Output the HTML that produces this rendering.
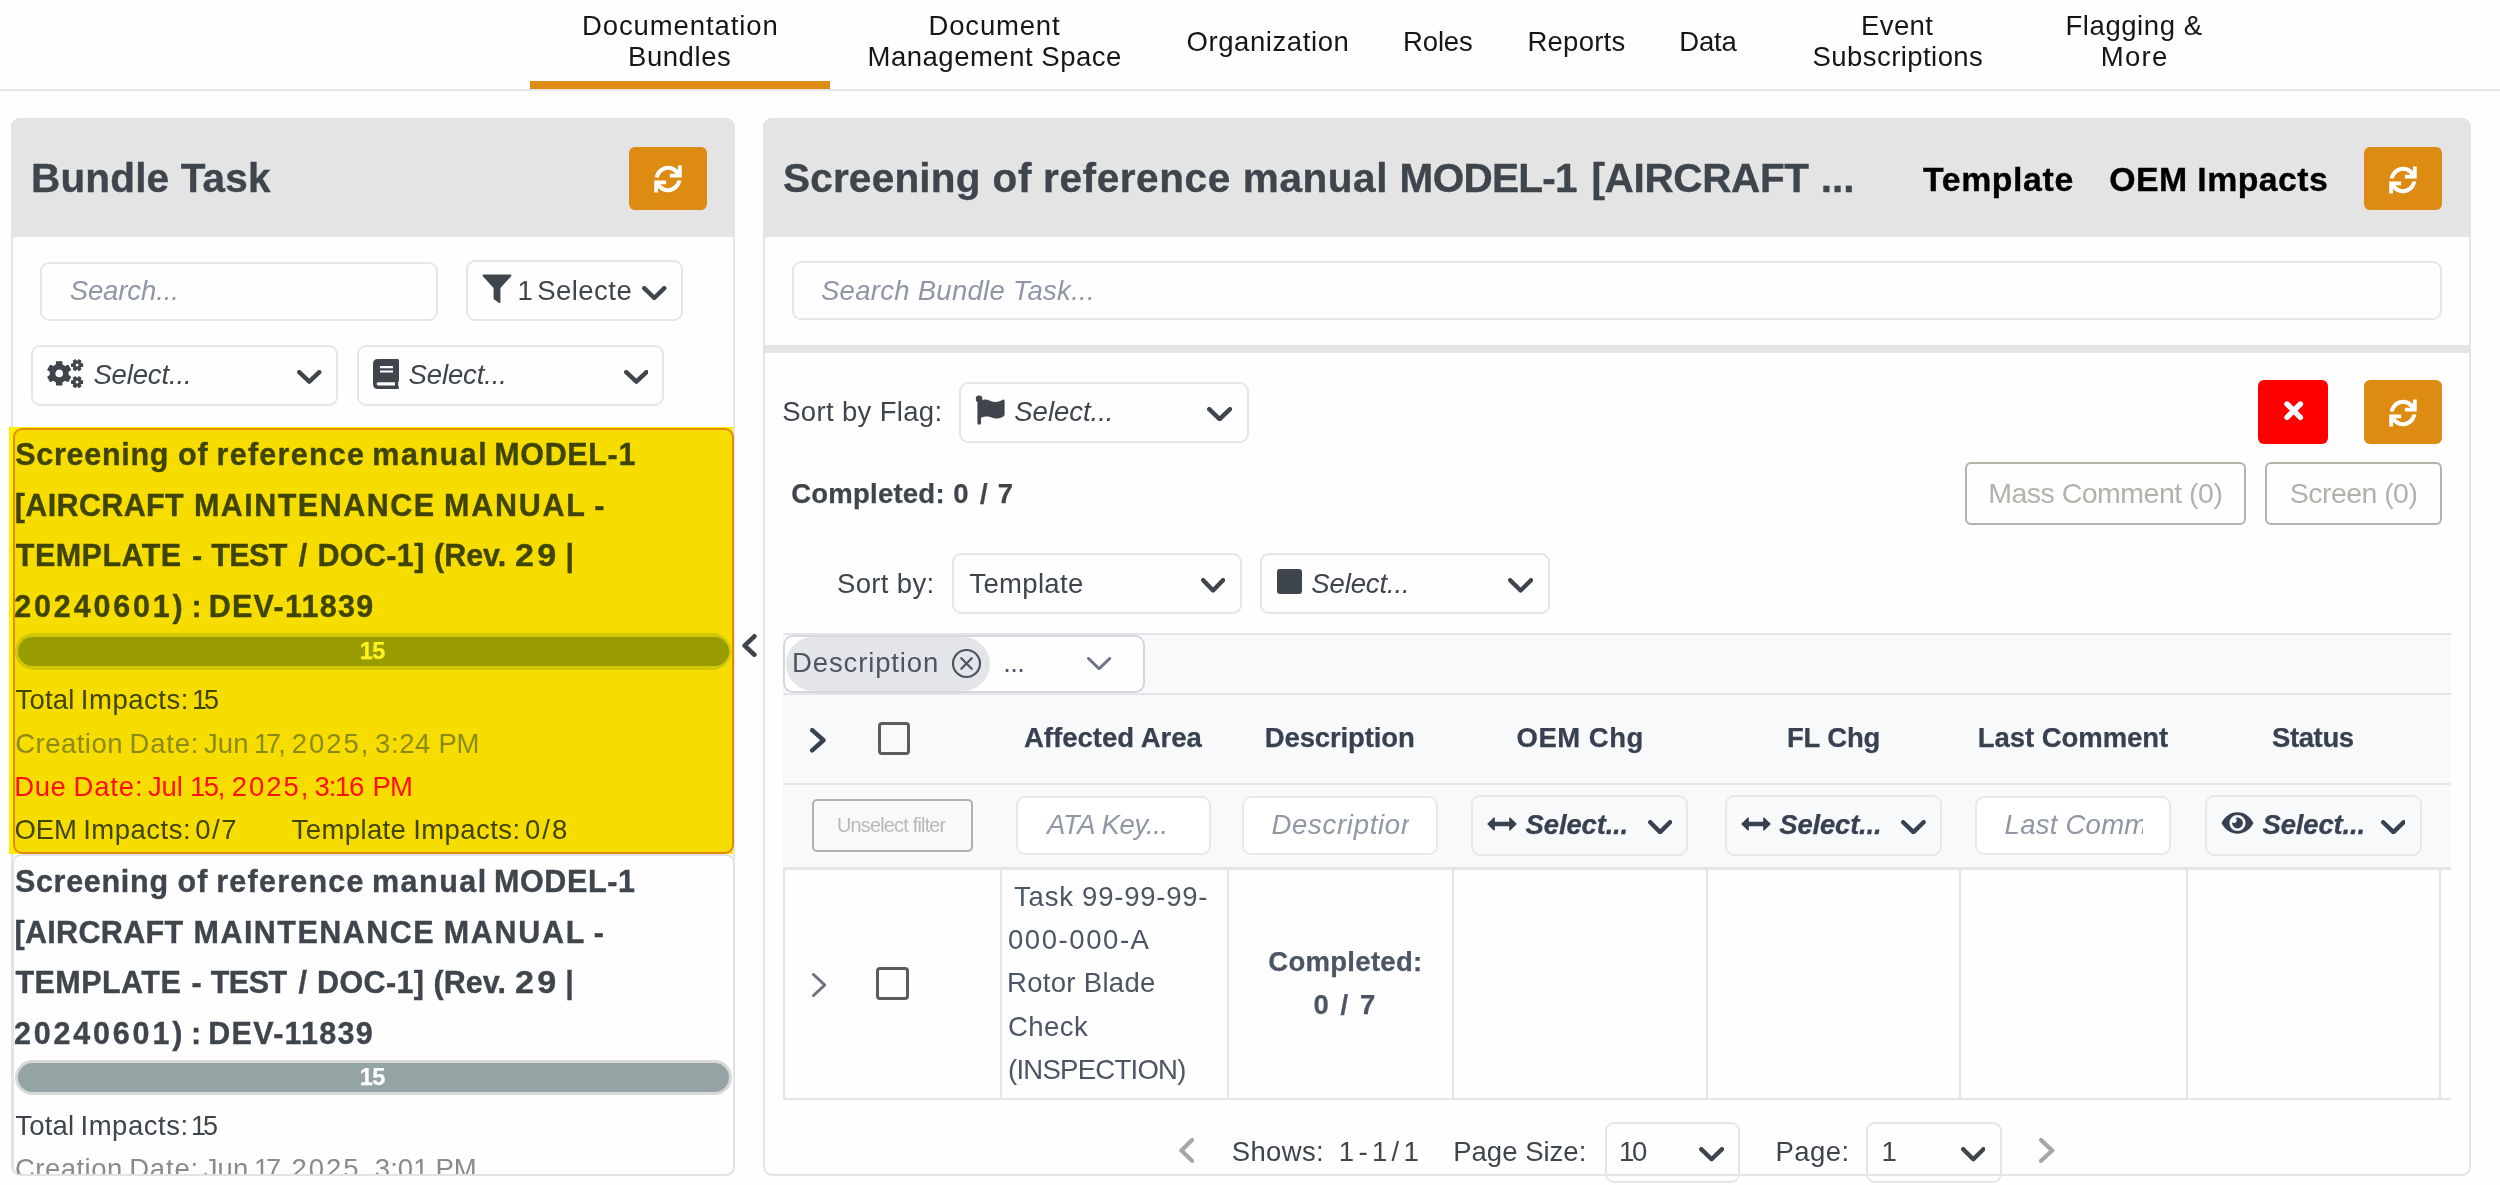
<!DOCTYPE html>
<html lang="en"><head><meta charset="utf-8"><title>Bundle Task</title>
<style>
html,body{margin:0;padding:0}
html{background:#fefefe}
body{width:2500px;height:1185px;overflow:hidden;position:relative;will-change:transform;
 font-family:"Liberation Sans",sans-serif;color:#3e454d}
.b{position:absolute;box-sizing:border-box;display:block}
.t{position:absolute;white-space:pre;margin:0;padding:0;font-weight:400;display:block}
nav,section{position:static;margin:0;padding:0}
.w{margin:0;padding:0;height:0;font-size:0;line-height:0}
</style></head>
<body>
<nav>
<div class="b" style="left:0px;top:89px;width:2500px;height:2px;background:#e6e6e6;"></div>
<div class="b" style="left:530px;top:81px;width:300px;height:8px;background:#de8b14;"></div>
<span class="t" style="left:582.00px;top:12.02px;font-size:27.5px;line-height:27.5px;color:#161616;letter-spacing:0.902px;">Documentation</span>
<span class="t" style="left:628.00px;top:42.72px;font-size:27.5px;line-height:27.5px;color:#161616;letter-spacing:0.562px;">Bundles</span>
<span class="t" style="left:928.50px;top:12.02px;font-size:27.5px;line-height:27.5px;color:#161616;letter-spacing:0.829px;">Document</span>
<span class="t" style="left:867.50px;top:42.72px;font-size:27.5px;line-height:27.5px;color:#161616;letter-spacing:0.511px;">Management Space</span>
<span class="t" style="left:1186.40px;top:28.02px;font-size:27.5px;line-height:27.5px;color:#161616;letter-spacing:0.597px;">Organization</span>
<span class="t" style="left:1403.00px;top:28.02px;font-size:27.5px;line-height:27.5px;color:#161616;letter-spacing:-0.139px;">Roles</span>
<span class="t" style="left:1527.50px;top:28.02px;font-size:27.5px;line-height:27.5px;color:#161616;letter-spacing:0.227px;">Reports</span>
<span class="t" style="left:1679.20px;top:28.02px;font-size:27.5px;line-height:27.5px;color:#161616;letter-spacing:-0.165px;">Data</span>
<span class="t" style="left:1861.00px;top:12.02px;font-size:27.5px;line-height:27.5px;color:#161616;letter-spacing:0.405px;">Event</span>
<span class="t" style="left:1812.60px;top:42.72px;font-size:27.5px;line-height:27.5px;color:#161616;letter-spacing:0.431px;">Subscriptions</span>
<span class="t" style="left:2065.50px;top:12.02px;font-size:27.5px;line-height:27.5px;color:#161616;letter-spacing:0.563px;">Flagging &amp;</span>
<span class="t" style="left:2100.70px;top:42.72px;font-size:27.5px;line-height:27.5px;color:#161616;letter-spacing:1.313px;">More</span>
</nav>
<section id="left">
<div class="b" style="left:11px;top:118px;width:724px;height:1057.8px;border:2px solid #e4e4e4;border-radius:9px;background:#fefefe;"></div>
<div class="b" style="left:11px;top:118px;width:724px;height:119px;background:#e4e4e4;border-radius:9px 9px 0 0;"></div>
<h2 class="t" style="left:31.00px;top:157.72px;font-size:40.5px;line-height:40.5px;font-weight:700;-webkit-text-stroke:0.35px currentColor;color:#3e454d;letter-spacing:0.173px;">Bundle Task</h2>
<div class="b btn" style="left:629px;top:147px;width:78px;height:63px;background:#de8b14;border-radius:6px;"></div>
<svg class="b" style="left:652.5px;top:164.15px" width="30.0" height="30.0" viewBox="-15 -15 30 30" ><defs><clipPath id="sc"><rect x="-15" y="-15" width="30" height="13.4"/></clipPath></defs><g><path d="M10,-13.55 H13.74 V-1.49 H1.86 V-5.2 H10 Z" fill="#fff"/><path d="M-11.1,2 A11.25,11.25 0 0 1 10.4,-4.2" fill="none" stroke="#fff" stroke-width="4" clip-path="url(#sc)"/></g><g transform="rotate(180)"><path d="M10,-13.55 H13.74 V-1.49 H1.86 V-5.2 H10 Z" fill="#fff"/><path d="M-11.1,2 A11.25,11.25 0 0 1 10.4,-4.2" fill="none" stroke="#fff" stroke-width="4" clip-path="url(#sc)"/></g></svg>
<div class="b" style="left:40px;top:261.5px;width:398px;height:59.0px;background:#fefefe;border:2px solid #e6e6e7;border-radius:9px;"></div>
<span class="t" style="left:69.70px;top:276.82px;font-size:27.5px;line-height:27.5px;font-style:italic;color:#8f97a5;letter-spacing:-0.102px;">Search...</span>
<div class="b" style="left:466px;top:260px;width:217px;height:61px;background:#fefefe;border:2px solid #e6e6e7;border-radius:9px;"></div>
<svg class="b" style="left:482px;top:274px" width="30" height="30" viewBox="0 0 30 30" ><path d="M1.6,0.6 H28.4 Q30,0.8 29,2.4 L18.4,14 V28.2 Q18.2,29.8 16.8,28.8 L11.6,25 V14 L1,2.4 Q0,0.8 1.6,0.6 Z" fill="#3e454d"/></svg>
<span class="w"><span class="t" style="left:517.60px;top:276.72px;font-size:27.5px;line-height:27.5px;color:#3e454d;">1</span><span class="t" style="left:537.20px;top:276.72px;font-size:27.5px;line-height:27.5px;color:#3e454d;letter-spacing:0.462px;">Selecte</span></span>
<svg class="b" style="left:642px;top:285.5px" width="24.5" height="14.5" viewBox="0 0 24.5 14.5" ><path d="M2.2,2.2 L12.25,11.97 L22.3,2.2" fill="none" stroke="#3e454d" stroke-width="4.4" stroke-linecap="round" stroke-linejoin="round"/></svg>
<div class="b" style="left:31px;top:344.5px;width:307px;height:61.0px;background:#fefefe;border:2px solid #e6e6e7;border-radius:9px;"></div>
<svg class="b" style="left:47px;top:359px" width="37" height="29" viewBox="0 0 37 29" ><path d="M9.60,2.79 L14.80,2.79 L14.98,5.84 L18.22,7.71 L20.96,6.35 L23.56,10.84 L21.00,12.53 L21.00,16.27 L23.56,17.96 L20.96,22.45 L18.22,21.09 L14.98,22.96 L14.80,26.01 L9.60,26.01 L9.42,22.96 L6.18,21.09 L3.44,22.45 L0.84,17.96 L3.40,16.27 L3.40,12.53 L0.84,10.84 L3.44,6.35 L6.18,7.71 L9.42,5.84 Z M16.60,14.40 A4.4,4.4 0 1 0 7.80,14.40 A4.4,4.4 0 1 0 16.60,14.40 Z M35.57,4.88 L35.57,7.32 L33.90,7.34 L33.07,8.78 L33.89,10.22 L31.77,11.44 L30.93,10.01 L29.27,10.01 L28.43,11.44 L26.31,10.22 L27.13,8.78 L26.30,7.34 L24.63,7.32 L24.63,4.88 L26.30,4.86 L27.13,3.42 L26.31,1.98 L28.43,0.76 L29.27,2.19 L30.93,2.19 L31.77,0.76 L33.89,1.98 L33.07,3.42 L33.90,4.86 Z M32.20,6.10 A2.1,2.1 0 1 0 28.00,6.10 A2.1,2.1 0 1 0 32.20,6.10 Z M35.57,21.88 L35.57,24.32 L33.90,24.34 L33.07,25.78 L33.89,27.22 L31.77,28.44 L30.93,27.01 L29.27,27.01 L28.43,28.44 L26.31,27.22 L27.13,25.78 L26.30,24.34 L24.63,24.32 L24.63,21.88 L26.30,21.86 L27.13,20.42 L26.31,18.98 L28.43,17.76 L29.27,19.19 L30.93,19.19 L31.77,17.76 L33.89,18.98 L33.07,20.42 L33.90,21.86 Z M32.20,23.10 A2.1,2.1 0 1 0 28.00,23.10 A2.1,2.1 0 1 0 32.20,23.10 Z" fill="#3e454d" fill-rule="evenodd" stroke="#3e454d" stroke-width="1.2" stroke-linejoin="round"/></svg>
<span class="t" style="left:93.40px;top:360.72px;font-size:27.5px;line-height:27.5px;font-style:italic;color:#3e454d;letter-spacing:-0.139px;">Select...</span>
<svg class="b" style="left:297.3px;top:369.8px" width="24.5" height="14.199999999999989" viewBox="0 0 24.5 14.199999999999989" ><path d="M2.2,2.2 L12.25,11.66999999999999 L22.3,2.2" fill="none" stroke="#3e454d" stroke-width="4.4" stroke-linecap="round" stroke-linejoin="round"/></svg>
<div class="b" style="left:357px;top:344.5px;width:307px;height:61.0px;background:#fefefe;border:2px solid #e6e6e7;border-radius:9px;"></div>
<svg class="b" style="left:373px;top:358.5px" width="26" height="30.0" viewBox="0 0 26 30" ><path d="M5,0 H24.6 Q26,0 26,1.4 V21.6 Q26,22.6 25.2,23 V27 Q26,27.4 26,28.4 Q26,30 24.6,30 H5 Q0,30 0,25 V5 Q0,0 5,0 Z M7,7 V9.2 H20 V7 Z M7,11.4 V13.6 H20 V11.4 Z M5.2,23.2 Q3.6,23.2 3.6,24.8 Q3.6,26.6 5.2,26.6 H22 V23.2 Z" fill="#3e454d" fill-rule="evenodd"/></svg>
<span class="t" style="left:408.50px;top:360.72px;font-size:27.5px;line-height:27.5px;font-style:italic;color:#3e454d;letter-spacing:-0.114px;">Select...</span>
<svg class="b" style="left:623.6px;top:369.8px" width="24.699999999999932" height="14.199999999999989" viewBox="0 0 24.699999999999932 14.199999999999989" ><path d="M2.2,2.2 L12.349999999999966,11.66999999999999 L22.499999999999932,2.2" fill="none" stroke="#3e454d" stroke-width="4.4" stroke-linecap="round" stroke-linejoin="round"/></svg>
<div class="b" style="left:9px;top:427px;width:724.4px;height:427px;background:#ffee00;"></div>
<div class="b" style="left:13px;top:428px;width:720.8px;height:426px;background:#f7dc00;border:2px solid #e38a00;border-radius:9px;"></div>
<div class="w"><span class="t" style="left:15.30px;top:438.98px;font-size:30.5px;line-height:30.5px;font-weight:700;-webkit-text-stroke:0.35px currentColor;color:#3f4400;letter-spacing:0.708px;">Screening</span><span class="t" style="left:178.00px;top:438.98px;font-size:30.5px;line-height:30.5px;font-weight:700;-webkit-text-stroke:0.35px currentColor;color:#3f4400;letter-spacing:0.969px;">of</span><span class="t" style="left:216.60px;top:438.98px;font-size:30.5px;line-height:30.5px;font-weight:700;-webkit-text-stroke:0.35px currentColor;color:#3f4400;letter-spacing:1.253px;">reference</span><span class="t" style="left:372.30px;top:438.98px;font-size:30.5px;line-height:30.5px;font-weight:700;-webkit-text-stroke:0.35px currentColor;color:#3f4400;letter-spacing:1.519px;">manual</span><span class="t" style="left:494.30px;top:438.98px;font-size:30.5px;line-height:30.5px;font-weight:700;-webkit-text-stroke:0.35px currentColor;color:#3f4400;letter-spacing:0.635px;">MODEL-1</span></div>
<div class="w"><span class="t" style="left:14.80px;top:489.58px;font-size:30.5px;line-height:30.5px;font-weight:700;-webkit-text-stroke:0.35px currentColor;color:#3f4400;letter-spacing:0.351px;">[AIRCRAFT</span><span class="t" style="left:193.90px;top:489.58px;font-size:30.5px;line-height:30.5px;font-weight:700;-webkit-text-stroke:0.35px currentColor;color:#3f4400;letter-spacing:1.479px;">MAINTENANCE</span><span class="t" style="left:444.10px;top:489.58px;font-size:30.5px;line-height:30.5px;font-weight:700;-webkit-text-stroke:0.35px currentColor;color:#3f4400;letter-spacing:1.718px;">MANUAL</span><span class="t" style="left:594.25px;top:489.58px;font-size:30.5px;line-height:30.5px;font-weight:700;-webkit-text-stroke:0.35px currentColor;color:#3f4400;">-</span></div>
<div class="w"><span class="t" style="left:15.80px;top:540.18px;font-size:30.5px;line-height:30.5px;font-weight:700;-webkit-text-stroke:0.35px currentColor;color:#3f4400;letter-spacing:0.465px;">TEMPLATE</span><span class="t" style="left:191.95px;top:540.18px;font-size:30.5px;line-height:30.5px;font-weight:700;-webkit-text-stroke:0.35px currentColor;color:#3f4400;">-</span><span class="t" style="left:211.20px;top:540.18px;font-size:30.5px;line-height:30.5px;font-weight:700;-webkit-text-stroke:0.35px currentColor;color:#3f4400;letter-spacing:-0.572px;">TEST</span><span class="t" style="left:298.80px;top:540.18px;font-size:30.5px;line-height:30.5px;font-weight:700;-webkit-text-stroke:0.35px currentColor;color:#3f4400;">/</span><span class="t" style="left:317.40px;top:540.18px;font-size:30.5px;line-height:30.5px;font-weight:700;-webkit-text-stroke:0.35px currentColor;color:#3f4400;letter-spacing:0.381px;">DOC-1]</span><span class="t" style="left:434.00px;top:540.18px;font-size:30.5px;line-height:30.5px;font-weight:700;-webkit-text-stroke:0.35px currentColor;color:#3f4400;letter-spacing:-0.011px;">(Rev.</span><span class="t" style="left:515.48px;top:540.18px;font-size:30.5px;line-height:30.5px;font-weight:700;-webkit-text-stroke:0.35px currentColor;color:#3f4400;letter-spacing:3.000px;transform:scaleX(1.1183);transform-origin:0 0;">29</span><span class="t" style="left:565.60px;top:540.18px;font-size:30.5px;line-height:30.5px;font-weight:700;-webkit-text-stroke:0.35px currentColor;color:#3f4400;">|</span></div>
<div class="w"><span class="t" style="left:14.30px;top:590.78px;font-size:30.5px;line-height:30.5px;font-weight:700;-webkit-text-stroke:0.35px currentColor;color:#3f4400;letter-spacing:2.825px;">20240601)</span><span class="t" style="left:191.50px;top:590.78px;font-size:30.5px;line-height:30.5px;font-weight:700;-webkit-text-stroke:0.35px currentColor;color:#3f4400;">:</span><span class="t" style="left:208.70px;top:590.78px;font-size:30.5px;line-height:30.5px;font-weight:700;-webkit-text-stroke:0.35px currentColor;color:#3f4400;letter-spacing:1.268px;">DEV-11839</span></div>
<div class="b" style="left:15px;top:633px;width:716px;height:37px;background:#d0c806;border-radius:19px;"></div>
<div class="b" style="left:18px;top:637px;width:711px;height:29px;background:#989c00;border-radius:15px;"></div>
<span class="t" style="left:359.75px;top:639.61px;font-size:23.5px;line-height:23.5px;font-weight:700;-webkit-text-stroke:0.25px currentColor;color:#fff31f;letter-spacing:-0.570px;">15</span>
<p class="w"><span class="t" style="left:15.60px;top:686.12px;font-size:27.5px;line-height:27.5px;color:#3f4400;letter-spacing:0.155px;">Total</span><span class="t" style="left:80.80px;top:686.12px;font-size:27.5px;line-height:27.5px;color:#3f4400;letter-spacing:0.518px;">Impacts:</span><span class="t" style="left:191.64px;top:686.12px;font-size:27.5px;line-height:27.5px;color:#3f4400;letter-spacing:-3.000px;transform:scaleX(0.9805);transform-origin:0 0;">15</span></p>
<p class="w"><span class="t" style="left:15.30px;top:729.52px;font-size:27.5px;line-height:27.5px;color:#8a8a18;letter-spacing:0.464px;">Creation</span><span class="t" style="left:129.50px;top:729.52px;font-size:27.5px;line-height:27.5px;color:#8a8a18;letter-spacing:0.803px;">Date:</span><span class="t" style="left:204.00px;top:729.52px;font-size:27.5px;line-height:27.5px;color:#8a8a18;letter-spacing:0.078px;">Jun</span><span class="t" style="left:254.33px;top:729.52px;font-size:27.5px;line-height:27.5px;color:#8a8a18;letter-spacing:-3.000px;transform:scaleX(0.9829);transform-origin:0 0;">17,</span><span class="t" style="left:291.80px;top:729.52px;font-size:27.5px;line-height:27.5px;color:#8a8a18;letter-spacing:1.931px;">2025,</span><span class="t" style="left:375.10px;top:729.52px;font-size:27.5px;line-height:27.5px;color:#8a8a18;letter-spacing:0.590px;">3:24</span><span class="t" style="left:438.40px;top:729.52px;font-size:27.5px;line-height:27.5px;color:#8a8a18;letter-spacing:-0.142px;">PM</span></p>
<p class="w"><span class="t" style="left:14.30px;top:773.02px;font-size:27.5px;line-height:27.5px;color:#ff1010;letter-spacing:0.523px;">Due</span><span class="t" style="left:73.60px;top:773.02px;font-size:27.5px;line-height:27.5px;color:#ff1010;letter-spacing:0.803px;">Date:</span><span class="t" style="left:148.10px;top:773.02px;font-size:27.5px;line-height:27.5px;color:#ff1010;letter-spacing:-0.222px;">Jul</span><span class="t" style="left:190.00px;top:773.02px;font-size:27.5px;line-height:27.5px;color:#ff1010;letter-spacing:-1.444px;">15,</span><span class="t" style="left:231.80px;top:773.02px;font-size:27.5px;line-height:27.5px;color:#ff1010;letter-spacing:1.931px;">2025,</span><span class="t" style="left:314.60px;top:773.02px;font-size:27.5px;line-height:27.5px;color:#ff1010;letter-spacing:-1.243px;">3:16</span><span class="t" style="left:372.40px;top:773.02px;font-size:27.5px;line-height:27.5px;color:#ff1010;letter-spacing:-0.642px;">PM</span></p>
<p class="w"><span class="t" style="left:14.60px;top:816.42px;font-size:27.5px;line-height:27.5px;color:#3f4400;letter-spacing:-0.216px;">OEM</span><span class="t" style="left:83.20px;top:816.42px;font-size:27.5px;line-height:27.5px;color:#3f4400;letter-spacing:0.489px;">Impacts:</span><span class="t" style="left:195.30px;top:816.42px;font-size:27.5px;line-height:27.5px;color:#3f4400;letter-spacing:1.483px;">0/7</span><span class="t" style="left:291.60px;top:816.42px;font-size:27.5px;line-height:27.5px;color:#3f4400;letter-spacing:0.387px;">Template</span><span class="t" style="left:413.20px;top:816.42px;font-size:27.5px;line-height:27.5px;color:#3f4400;letter-spacing:0.418px;">Impacts:</span><span class="t" style="left:525.10px;top:816.42px;font-size:27.5px;line-height:27.5px;color:#3f4400;letter-spacing:1.933px;">0/8</span></p>
<div class="b" style="left:12px;top:854px;width:722.7px;height:321.5999999999999px;background:#fefefe;border:2.5px solid #e2e2e2;border-radius:9px;overflow:hidden;"></div>
<div class="w"><span class="t" style="left:14.90px;top:865.98px;font-size:30.5px;line-height:30.5px;font-weight:700;-webkit-text-stroke:0.35px currentColor;color:#3e454d;letter-spacing:0.708px;">Screening</span><span class="t" style="left:177.60px;top:865.98px;font-size:30.5px;line-height:30.5px;font-weight:700;-webkit-text-stroke:0.35px currentColor;color:#3e454d;letter-spacing:0.969px;">of</span><span class="t" style="left:216.20px;top:865.98px;font-size:30.5px;line-height:30.5px;font-weight:700;-webkit-text-stroke:0.35px currentColor;color:#3e454d;letter-spacing:1.253px;">reference</span><span class="t" style="left:371.90px;top:865.98px;font-size:30.5px;line-height:30.5px;font-weight:700;-webkit-text-stroke:0.35px currentColor;color:#3e454d;letter-spacing:1.519px;">manual</span><span class="t" style="left:493.90px;top:865.98px;font-size:30.5px;line-height:30.5px;font-weight:700;-webkit-text-stroke:0.35px currentColor;color:#3e454d;letter-spacing:0.635px;">MODEL-1</span></div>
<div class="w"><span class="t" style="left:14.40px;top:916.58px;font-size:30.5px;line-height:30.5px;font-weight:700;-webkit-text-stroke:0.35px currentColor;color:#3e454d;letter-spacing:0.351px;">[AIRCRAFT</span><span class="t" style="left:193.50px;top:916.58px;font-size:30.5px;line-height:30.5px;font-weight:700;-webkit-text-stroke:0.35px currentColor;color:#3e454d;letter-spacing:1.479px;">MAINTENANCE</span><span class="t" style="left:443.70px;top:916.58px;font-size:30.5px;line-height:30.5px;font-weight:700;-webkit-text-stroke:0.35px currentColor;color:#3e454d;letter-spacing:1.718px;">MANUAL</span><span class="t" style="left:593.85px;top:916.58px;font-size:30.5px;line-height:30.5px;font-weight:700;-webkit-text-stroke:0.35px currentColor;color:#3e454d;">-</span></div>
<div class="w"><span class="t" style="left:15.40px;top:967.18px;font-size:30.5px;line-height:30.5px;font-weight:700;-webkit-text-stroke:0.35px currentColor;color:#3e454d;letter-spacing:0.465px;">TEMPLATE</span><span class="t" style="left:191.55px;top:967.18px;font-size:30.5px;line-height:30.5px;font-weight:700;-webkit-text-stroke:0.35px currentColor;color:#3e454d;">-</span><span class="t" style="left:210.80px;top:967.18px;font-size:30.5px;line-height:30.5px;font-weight:700;-webkit-text-stroke:0.35px currentColor;color:#3e454d;letter-spacing:-0.572px;">TEST</span><span class="t" style="left:298.40px;top:967.18px;font-size:30.5px;line-height:30.5px;font-weight:700;-webkit-text-stroke:0.35px currentColor;color:#3e454d;">/</span><span class="t" style="left:317.00px;top:967.18px;font-size:30.5px;line-height:30.5px;font-weight:700;-webkit-text-stroke:0.35px currentColor;color:#3e454d;letter-spacing:0.381px;">DOC-1]</span><span class="t" style="left:433.60px;top:967.18px;font-size:30.5px;line-height:30.5px;font-weight:700;-webkit-text-stroke:0.35px currentColor;color:#3e454d;letter-spacing:-0.011px;">(Rev.</span><span class="t" style="left:515.08px;top:967.18px;font-size:30.5px;line-height:30.5px;font-weight:700;-webkit-text-stroke:0.35px currentColor;color:#3e454d;letter-spacing:3.000px;transform:scaleX(1.1183);transform-origin:0 0;">29</span><span class="t" style="left:565.20px;top:967.18px;font-size:30.5px;line-height:30.5px;font-weight:700;-webkit-text-stroke:0.35px currentColor;color:#3e454d;">|</span></div>
<div class="w"><span class="t" style="left:13.90px;top:1017.78px;font-size:30.5px;line-height:30.5px;font-weight:700;-webkit-text-stroke:0.35px currentColor;color:#3e454d;letter-spacing:2.825px;">20240601)</span><span class="t" style="left:191.10px;top:1017.78px;font-size:30.5px;line-height:30.5px;font-weight:700;-webkit-text-stroke:0.35px currentColor;color:#3e454d;">:</span><span class="t" style="left:208.30px;top:1017.78px;font-size:30.5px;line-height:30.5px;font-weight:700;-webkit-text-stroke:0.35px currentColor;color:#3e454d;letter-spacing:1.268px;">DEV-11839</span></div>
<div class="b" style="left:14.5px;top:1059.5px;width:717.0px;height:35.5px;background:#d8d8d8;border-radius:19px;"></div>
<div class="b" style="left:17.5px;top:1063px;width:711.5px;height:29px;background:#94a3a3;border-radius:15px;"></div>
<span class="t" style="left:359.75px;top:1065.61px;font-size:23.5px;line-height:23.5px;font-weight:700;-webkit-text-stroke:0.25px currentColor;color:#fff;letter-spacing:-0.570px;">15</span>
<p class="w"><span class="t" style="left:15.30px;top:1111.92px;font-size:27.5px;line-height:27.5px;color:#3e454d;letter-spacing:0.155px;">Total</span><span class="t" style="left:80.50px;top:1111.92px;font-size:27.5px;line-height:27.5px;color:#3e454d;letter-spacing:0.518px;">Impacts:</span><span class="t" style="left:191.34px;top:1111.92px;font-size:27.5px;line-height:27.5px;color:#3e454d;letter-spacing:-3.000px;transform:scaleX(0.9805);transform-origin:0 0;">15</span></p>
<div class="b" style="left:14px;top:1140px;width:716px;height:34.2px;overflow:hidden"><p class="w"><span class="t" style="left:1.00px;top:15.32px;font-size:27.5px;line-height:27.5px;color:#8a8a8a;letter-spacing:0.464px;">Creation</span><span class="t" style="left:115.20px;top:15.32px;font-size:27.5px;line-height:27.5px;color:#8a8a8a;letter-spacing:0.803px;">Date:</span><span class="t" style="left:189.70px;top:15.32px;font-size:27.5px;line-height:27.5px;color:#8a8a8a;letter-spacing:0.078px;">Jun</span><span class="t" style="left:240.03px;top:15.32px;font-size:27.5px;line-height:27.5px;color:#8a8a8a;letter-spacing:-3.000px;transform:scaleX(0.9829);transform-origin:0 0;">17,</span><span class="t" style="left:277.50px;top:15.32px;font-size:27.5px;line-height:27.5px;color:#8a8a8a;letter-spacing:1.931px;">2025,</span><span class="t" style="left:360.80px;top:15.32px;font-size:27.5px;line-height:27.5px;color:#8a8a8a;letter-spacing:0.057px;">3:01</span><span class="t" style="left:421.50px;top:15.32px;font-size:27.5px;line-height:27.5px;color:#8a8a8a;letter-spacing:-0.142px;">PM</span></p></div>
</section>
<svg class="b" style="left:741.9px;top:634.2px" width="14.700000000000045" height="23.09999999999991" viewBox="0 0 14.700000000000045 23.09999999999991" ><path d="M12.400000000000045,2.3 L2.6449999999999996,11.549999999999955 L12.400000000000045,20.79999999999991" fill="none" stroke="#3e454d" stroke-width="4.6" stroke-linecap="round" stroke-linejoin="round"/></svg>
<section id="right">
<div class="b" style="left:763px;top:118px;width:1708px;height:1057.8px;border:2px solid #e4e4e4;border-radius:9px;background:#fefefe;"></div>
<div class="b" style="left:763px;top:118px;width:1708px;height:119px;background:#e4e4e4;border-radius:9px 9px 0 0;"></div>
<h2 class="w"><span class="t" style="left:782.90px;top:158.02px;font-size:40.5px;line-height:40.5px;font-weight:700;-webkit-text-stroke:0.35px currentColor;color:#3e454d;letter-spacing:0.228px;">Screening</span><span class="t" style="left:992.60px;top:158.02px;font-size:40.5px;line-height:40.5px;font-weight:700;-webkit-text-stroke:0.35px currentColor;color:#3e454d;letter-spacing:0.761px;">of</span><span class="t" style="left:1043.10px;top:158.02px;font-size:40.5px;line-height:40.5px;font-weight:700;-webkit-text-stroke:0.35px currentColor;color:#3e454d;letter-spacing:0.594px;">reference</span><span class="t" style="left:1242.80px;top:158.02px;font-size:40.5px;line-height:40.5px;font-weight:700;-webkit-text-stroke:0.35px currentColor;color:#3e454d;letter-spacing:0.573px;">manual</span><span class="t" style="left:1399.60px;top:158.02px;font-size:40.5px;line-height:40.5px;font-weight:700;-webkit-text-stroke:0.35px currentColor;color:#3e454d;letter-spacing:-0.704px;">MODEL-1</span><span class="t" style="left:1591.50px;top:158.02px;font-size:40.5px;line-height:40.5px;font-weight:700;-webkit-text-stroke:0.35px currentColor;color:#3e454d;letter-spacing:-0.365px;">[AIRCRAFT</span><span class="t" style="left:1820.80px;top:158.02px;font-size:40.5px;line-height:40.5px;font-weight:700;-webkit-text-stroke:0.35px currentColor;color:#3e454d;letter-spacing:-0.052px;">...</span></h2>
<span class="t" style="left:1923.00px;top:162.69px;font-size:33.8px;line-height:33.8px;font-weight:700;-webkit-text-stroke:0.35px currentColor;color:#000;letter-spacing:0.619px;">Template</span>
<span class="t" style="left:2109.20px;top:162.69px;font-size:33.8px;line-height:33.8px;font-weight:700;-webkit-text-stroke:0.35px currentColor;color:#000;letter-spacing:0.449px;">OEM Impacts</span>
<div class="b btn" style="left:2364px;top:147px;width:78px;height:63px;background:#de8b14;border-radius:6px;"></div>
<svg class="b" style="left:2388.0px;top:164.65px" width="30.0" height="30.0" viewBox="-15 -15 30 30" ><defs><clipPath id="sc"><rect x="-15" y="-15" width="30" height="13.4"/></clipPath></defs><g><path d="M10,-13.55 H13.74 V-1.49 H1.86 V-5.2 H10 Z" fill="#fff"/><path d="M-11.1,2 A11.25,11.25 0 0 1 10.4,-4.2" fill="none" stroke="#fff" stroke-width="4" clip-path="url(#sc)"/></g><g transform="rotate(180)"><path d="M10,-13.55 H13.74 V-1.49 H1.86 V-5.2 H10 Z" fill="#fff"/><path d="M-11.1,2 A11.25,11.25 0 0 1 10.4,-4.2" fill="none" stroke="#fff" stroke-width="4" clip-path="url(#sc)"/></g></svg>
<div class="b" style="left:792px;top:261px;width:1650px;height:59px;background:#fefefe;border:2px solid #e6e6e7;border-radius:9px;"></div>
<span class="t" style="left:821.00px;top:276.52px;font-size:27.5px;line-height:27.5px;font-style:italic;color:#8f97a5;letter-spacing:0.280px;">Search Bundle Task...</span>
<div class="b" style="left:765px;top:345px;width:1704px;height:8px;background:#e4e4e4;"></div>
<span class="t" style="left:782.20px;top:398.32px;font-size:27.5px;line-height:27.5px;color:#3e454d;letter-spacing:0.337px;">Sort by Flag:</span>
<div class="b" style="left:959px;top:381.8px;width:290px;height:60.80000000000001px;background:#fefefe;border:2px solid #e6e6e7;border-radius:9px;"></div>
<svg class="b" style="left:975.2px;top:395.3px" width="30.0" height="31.0" viewBox="0 0 30 31" ><circle cx="4.1" cy="3.9" r="3.3" fill="#3e454d"/><path d="M2.4,3.9 H6 V28 A1.8,1.8 0 0 1 2.4,28 Z" fill="#3e454d"/><path d="M5.8,5.8 C8,4.7 9.5,4.3 11,4.4 C14,4.7 17,7 20.5,7 C23.5,7 26,5.5 27.8,4.7 Q29.6,4.1 29.6,6 V19.6 Q29.6,20.8 28.4,21.5 C26,22.9 23.5,23.6 21.3,23.6 C18,23.6 15,21.5 12,21.5 C10,21.5 8,22 5.8,22.9 Z" fill="#3e454d"/></svg>
<span class="t" style="left:1014.30px;top:398.32px;font-size:27.5px;line-height:27.5px;font-style:italic;color:#3e454d;letter-spacing:-0.026px;">Select...</span>
<svg class="b" style="left:1207.2px;top:406.5px" width="25.200000000000045" height="14.699999999999989" viewBox="0 0 25.200000000000045 14.699999999999989" ><path d="M2.2,2.2 L12.600000000000023,12.16999999999999 L23.000000000000046,2.2" fill="none" stroke="#3e454d" stroke-width="4.4" stroke-linecap="round" stroke-linejoin="round"/></svg>
<div class="b btn" style="left:2258px;top:380px;width:70px;height:64px;background:#ff0000;border-radius:6px;"></div>
<svg class="b" style="left:2282.6000000000004px;top:399.8px" width="21.399999999999636" height="21.399999999999977" viewBox="-10.7 -10.7 21.4 21.4" ><path d="M-6.7,-6.7 L6.7,6.7 M6.7,-6.7 L-6.7,6.7" stroke="#fff" stroke-width="5.4" stroke-linecap="round"/></svg>
<div class="b btn" style="left:2364px;top:380px;width:78px;height:64px;background:#de8b14;border-radius:6px;"></div>
<svg class="b" style="left:2388.0px;top:397.65px" width="30.0" height="30.0" viewBox="-15 -15 30 30" ><defs><clipPath id="sc"><rect x="-15" y="-15" width="30" height="13.4"/></clipPath></defs><g><path d="M10,-13.55 H13.74 V-1.49 H1.86 V-5.2 H10 Z" fill="#fff"/><path d="M-11.1,2 A11.25,11.25 0 0 1 10.4,-4.2" fill="none" stroke="#fff" stroke-width="4" clip-path="url(#sc)"/></g><g transform="rotate(180)"><path d="M10,-13.55 H13.74 V-1.49 H1.86 V-5.2 H10 Z" fill="#fff"/><path d="M-11.1,2 A11.25,11.25 0 0 1 10.4,-4.2" fill="none" stroke="#fff" stroke-width="4" clip-path="url(#sc)"/></g></svg>
<p class="w"><span class="t" style="left:791.20px;top:480.42px;font-size:27.5px;line-height:27.5px;font-weight:700;-webkit-text-stroke:0.25px currentColor;color:#3e454d;letter-spacing:0.234px;">Completed:</span><span class="t" style="left:953.30px;top:480.42px;font-size:27.5px;line-height:27.5px;font-weight:700;-webkit-text-stroke:0.25px currentColor;color:#3e454d;">0</span><span class="t" style="left:980.10px;top:480.42px;font-size:27.5px;line-height:27.5px;font-weight:700;-webkit-text-stroke:0.25px currentColor;color:#3e454d;">/</span><span class="t" style="left:997.80px;top:480.42px;font-size:27.5px;line-height:27.5px;font-weight:700;-webkit-text-stroke:0.25px currentColor;color:#3e454d;">7</span></p>
<div class="b btn" style="left:1965px;top:462px;width:281px;height:63px;border:2px solid #b3b3a9;border-radius:6px;background:#fefefe;"></div>
<span class="t" style="left:1988.20px;top:479.47px;font-size:28.5px;line-height:28.5px;color:#b2b2ab;letter-spacing:-0.507px;">Mass Comment (0)</span>
<div class="b btn" style="left:2265px;top:462px;width:177px;height:63px;border:2px solid #b3b3a9;border-radius:6px;background:#fefefe;"></div>
<span class="t" style="left:2289.80px;top:479.47px;font-size:28.5px;line-height:28.5px;color:#b2b2ab;letter-spacing:-0.551px;">Screen (0)</span>
<span class="t" style="left:837.00px;top:569.72px;font-size:27.5px;line-height:27.5px;color:#3e454d;letter-spacing:0.354px;">Sort by:</span>
<div class="b" style="left:952px;top:553px;width:290px;height:61px;background:#fefefe;border:2px solid #e6e6e7;border-radius:9px;"></div>
<span class="t" style="left:969.30px;top:569.72px;font-size:27.5px;line-height:27.5px;color:#3e454d;letter-spacing:0.344px;">Template</span>
<svg class="b" style="left:1200.8px;top:578px" width="24.200000000000045" height="15" viewBox="0 0 24.200000000000045 15" ><path d="M2.2,2.2 L12.100000000000023,12.47 L22.000000000000046,2.2" fill="none" stroke="#3e454d" stroke-width="4.4" stroke-linecap="round" stroke-linejoin="round"/></svg>
<div class="b" style="left:1260px;top:553px;width:290px;height:61px;background:#fefefe;border:2px solid #e6e6e7;border-radius:9px;"></div>
<div class="b" style="left:1276.5px;top:569px;width:25.0px;height:25px;background:#3e454d;border-radius:3px;"></div>
<span class="t" style="left:1311.30px;top:569.72px;font-size:27.5px;line-height:27.5px;font-style:italic;color:#3e454d;letter-spacing:-0.126px;">Select...</span>
<svg class="b" style="left:1507.8px;top:578px" width="25.200000000000045" height="15" viewBox="0 0 25.200000000000045 15" ><path d="M2.2,2.2 L12.600000000000023,12.47 L23.000000000000046,2.2" fill="none" stroke="#3e454d" stroke-width="4.4" stroke-linecap="round" stroke-linejoin="round"/></svg>
<div class="b" style="left:783px;top:632.5px;width:1668px;height:236.0px;background:#f8f9fb;"></div>
<div class="b" style="left:783px;top:632.5px;width:1668px;height:2.0px;background:#e3e5e9;"></div>
<div class="b" style="left:783px;top:693px;width:1668px;height:2px;background:#e3e5e9;"></div>
<div class="b" style="left:783px;top:782.5px;width:1668px;height:2.0px;background:#e3e5e9;"></div>
<div class="b" style="left:783px;top:866.5px;width:1668px;height:3.0px;background:#e3e5e9;"></div>
<div class="b" style="left:783px;top:634.5px;width:362px;height:58.0px;background:#fefefe;border:2px solid #d3d6dd;border-radius:10px;"></div>
<div class="b" style="left:785.5px;top:636.8px;width:204.5px;height:54.0px;background:#e4e5e9;border-radius:27px;"></div>
<span class="t" style="left:792.00px;top:648.92px;font-size:27.5px;line-height:27.5px;color:#4b5563;letter-spacing:0.874px;">Description</span>
<svg class="b" style="left:951.0px;top:647.8px" width="31.0" height="31.0" viewBox="0 0 31.0 31.0" ><circle cx="15.5" cy="15.5" r="13.5" fill="none" stroke="#4b5563" stroke-width="2.2"/><path d="M10.280000000000001,10.280000000000001 L20.72,20.72 M20.72,10.280000000000001 L10.280000000000001,20.72" stroke="#4b5563" stroke-width="2.2" stroke-linecap="round"/></svg>
<span class="t" style="left:1003.30px;top:648.92px;font-size:27.5px;line-height:27.5px;color:#4b5563;letter-spacing:-0.640px;">...</span>
<svg class="b" style="left:1087.4px;top:656.5px" width="24.199999999999818" height="13.5" viewBox="0 0 24.199999999999818 13.5" ><path d="M1.5,1.5 L12.099999999999909,11.775 L22.699999999999818,1.5" fill="none" stroke="#6b7280" stroke-width="3" stroke-linecap="round" stroke-linejoin="round"/></svg>
<svg class="b" style="left:810px;top:728px" width="16" height="24.5" viewBox="0 0 16 24.5" ><path d="M2.2,2.2 L13.47,12.25 L2.2,22.3" fill="none" stroke="#374151" stroke-width="4.4" stroke-linecap="round" stroke-linejoin="round"/></svg>
<div class="b" style="left:878px;top:722.3px;width:32.299999999999955px;height:32.299999999999955px;border:3px solid #5c5c5c;border-radius:4px;background:transparent;"></div>
<span class="t" style="left:1024.00px;top:724.02px;font-size:27.5px;line-height:27.5px;font-weight:700;-webkit-text-stroke:0.25px currentColor;color:#374151;">Affected Area</span>
<span class="t" style="left:1264.80px;top:724.02px;font-size:27.5px;line-height:27.5px;font-weight:700;-webkit-text-stroke:0.25px currentColor;color:#374151;letter-spacing:-0.128px;">Description</span>
<span class="t" style="left:1516.50px;top:724.02px;font-size:27.5px;line-height:27.5px;font-weight:700;-webkit-text-stroke:0.25px currentColor;color:#374151;letter-spacing:0.510px;">OEM Chg</span>
<span class="t" style="left:1787.00px;top:724.02px;font-size:27.5px;line-height:27.5px;font-weight:700;-webkit-text-stroke:0.25px currentColor;color:#374151;letter-spacing:-0.179px;">FL Chg</span>
<span class="t" style="left:1977.80px;top:724.02px;font-size:27.5px;line-height:27.5px;font-weight:700;-webkit-text-stroke:0.25px currentColor;color:#374151;letter-spacing:-0.058px;">Last Comment</span>
<span class="t" style="left:2272.00px;top:724.02px;font-size:27.5px;line-height:27.5px;font-weight:700;-webkit-text-stroke:0.25px currentColor;color:#374151;letter-spacing:-0.390px;">Status</span>
<div class="b btn" style="left:812px;top:799.3px;width:160.5px;height:52.700000000000045px;border:2px solid #b3b0a7;border-radius:5px;background:#f8f9fb;"></div>
<span class="t" style="left:837.10px;top:815.64px;font-size:19.8px;line-height:19.8px;color:#b9b9b6;letter-spacing:-0.767px;">Unselect filter</span>
<div class="b" style="left:1016px;top:796px;width:195px;height:58.5px;background:#fff;border:2px solid #e8e8ea;border-radius:9px;"></div>
<span class="t" style="left:1047.00px;top:810.92px;font-size:27.5px;line-height:27.5px;font-style:italic;color:#8f97a5;letter-spacing:-0.352px;">ATA Key...</span>
<div class="b" style="left:1242px;top:796px;width:196px;height:58.5px;background:#fff;border:2px solid #e8e8ea;border-radius:9px;"></div>
<div class="b" style="left:1262px;top:800px;width:147px;height:50px;overflow:hidden"><span class="t" style="left:9.40px;top:10.92px;font-size:27.5px;line-height:27.5px;font-style:italic;color:#8f97a5;letter-spacing:0.724px;">Description</span></div>
<div class="b" style="left:1471px;top:795px;width:217px;height:60.5px;background:#f8f9fb;border:2px solid #e8e8ea;border-radius:9px;"></div>
<svg class="b" style="left:1487px;top:815.5px" width="30" height="16.0" viewBox="0 0 30 16" ><path d="M1,8 L7.2,2 V6.4 H22.8 V2 L29,8 L22.8,14 V9.6 H7.2 V14 Z" fill="#374151" stroke="#374151" stroke-width="1.2" stroke-linejoin="round"/></svg>
<span class="t" style="left:1525.60px;top:810.72px;font-size:27.5px;line-height:27.5px;font-weight:700;-webkit-text-stroke:0.25px currentColor;font-style:italic;color:#374151;letter-spacing:-0.163px;">Select...</span>
<svg class="b" style="left:1647.6px;top:819.5px" width="24.200000000000045" height="14.700000000000045" viewBox="0 0 24.200000000000045 14.700000000000045" ><path d="M2.2,2.2 L12.100000000000023,12.170000000000046 L22.000000000000046,2.2" fill="none" stroke="#374151" stroke-width="4.4" stroke-linecap="round" stroke-linejoin="round"/></svg>
<div class="b" style="left:1725px;top:795px;width:217px;height:60.5px;background:#f8f9fb;border:2px solid #e8e8ea;border-radius:9px;"></div>
<svg class="b" style="left:1740.5px;top:815.5px" width="30.0" height="16.0" viewBox="0 0 30 16" ><path d="M1,8 L7.2,2 V6.4 H22.8 V2 L29,8 L22.8,14 V9.6 H7.2 V14 Z" fill="#374151" stroke="#374151" stroke-width="1.2" stroke-linejoin="round"/></svg>
<span class="t" style="left:1779.30px;top:810.72px;font-size:27.5px;line-height:27.5px;font-weight:700;-webkit-text-stroke:0.25px currentColor;font-style:italic;color:#374151;letter-spacing:-0.200px;">Select...</span>
<svg class="b" style="left:1900.8px;top:819.5px" width="24.799999999999955" height="14.700000000000045" viewBox="0 0 24.799999999999955 14.700000000000045" ><path d="M2.2,2.2 L12.399999999999977,12.170000000000046 L22.599999999999955,2.2" fill="none" stroke="#374151" stroke-width="4.4" stroke-linecap="round" stroke-linejoin="round"/></svg>
<div class="b" style="left:1975px;top:796px;width:196px;height:58.5px;background:#fff;border:2px solid #e8e8ea;border-radius:9px;"></div>
<div class="b" style="left:1995px;top:800px;width:148px;height:50px;overflow:hidden"><span class="t" style="left:9.60px;top:10.92px;font-size:27.5px;line-height:27.5px;font-style:italic;color:#8f97a5;letter-spacing:0.257px;">Last Comment</span></div>
<div class="b" style="left:2205px;top:795px;width:217px;height:60.5px;background:#f8f9fb;border:2px solid #e8e8ea;border-radius:9px;"></div>
<svg class="b" style="left:2220.5px;top:812.2px" width="33.0" height="22.0" viewBox="0 0 33 22" ><defs><mask id="pm"><rect width="33" height="22" fill="#fff"/><circle cx="13" cy="8.2" r="2.7" fill="#000"/></mask></defs><path d="M0.5,11 C4.6,3.2 10.5,0.3 16.5,0.3 C22.5,0.3 28.4,3.2 32.5,11 C28.4,18.8 22.5,21.7 16.5,21.7 C10.5,21.7 4.6,18.8 0.5,11 Z M16.5,2.9 A8.1,8.1 0 1 0 16.5,19.1 A8.1,8.1 0 1 0 16.5,2.9 Z" fill="#374151" fill-rule="evenodd"/><circle cx="16.5" cy="11" r="5.4" fill="#374151" mask="url(#pm)"/></svg>
<span class="t" style="left:2262.60px;top:810.72px;font-size:27.5px;line-height:27.5px;font-weight:700;-webkit-text-stroke:0.25px currentColor;font-style:italic;color:#374151;letter-spacing:-0.188px;">Select...</span>
<svg class="b" style="left:2380.6px;top:819.5px" width="24.800000000000182" height="14.700000000000045" viewBox="0 0 24.800000000000182 14.700000000000045" ><path d="M2.2,2.2 L12.400000000000091,12.170000000000046 L22.600000000000183,2.2" fill="none" stroke="#374151" stroke-width="4.4" stroke-linecap="round" stroke-linejoin="round"/></svg>
<div class="b" style="left:783px;top:869.5px;width:1668px;height:230.0px;background:#fefefe;"></div>
<div class="b" style="left:783px;top:1097.5px;width:1668px;height:2.0px;background:#e3e5e9;"></div>
<div class="b" style="left:783px;top:869.5px;width:2px;height:230.0px;background:#e3e5e9;"></div>
<div class="b" style="left:1000.3px;top:869.5px;width:2.0px;height:230.0px;background:#e3e5e9;"></div>
<div class="b" style="left:1226.5px;top:869.5px;width:2.0px;height:230.0px;background:#e3e5e9;"></div>
<div class="b" style="left:1452px;top:869.5px;width:2px;height:230.0px;background:#e3e5e9;"></div>
<div class="b" style="left:1705.5px;top:869.5px;width:2.0px;height:230.0px;background:#e3e5e9;"></div>
<div class="b" style="left:1959px;top:869.5px;width:2px;height:230.0px;background:#e3e5e9;"></div>
<div class="b" style="left:2185.5px;top:869.5px;width:2.0px;height:230.0px;background:#e3e5e9;"></div>
<div class="b" style="left:2439px;top:869.5px;width:2px;height:230.0px;background:#e3e5e9;"></div>
<svg class="b" style="left:811.5px;top:972.5px" width="14.5" height="24.0" viewBox="0 0 14.5 24.0" ><path d="M1.5,1.5 L12.775,12.0 L1.5,22.5" fill="none" stroke="#6b7280" stroke-width="3" stroke-linecap="round" stroke-linejoin="round"/></svg>
<div class="b" style="left:876.3px;top:967.4px;width:32.299999999999955px;height:32.299999999999955px;border:3px solid #5c5c5c;border-radius:4px;background:transparent;"></div>
<span class="t" style="left:1014.10px;top:882.52px;font-size:27.5px;line-height:27.5px;color:#4b5563;letter-spacing:0.764px;">Task 99-99-99-</span>
<span class="t" style="left:1008.00px;top:925.97px;font-size:27.5px;line-height:27.5px;color:#4b5563;letter-spacing:1.565px;">000-000-A</span>
<span class="t" style="left:1007.00px;top:969.42px;font-size:27.5px;line-height:27.5px;color:#4b5563;letter-spacing:0.307px;">Rotor Blade</span>
<span class="t" style="left:1008.00px;top:1012.87px;font-size:27.5px;line-height:27.5px;color:#4b5563;letter-spacing:0.451px;">Check</span>
<span class="t" style="left:1008.00px;top:1056.32px;font-size:27.5px;line-height:27.5px;color:#4b5563;letter-spacing:-0.730px;">(INSPECTION)</span>
<span class="t" style="left:1268.30px;top:947.72px;font-size:27.5px;line-height:27.5px;font-weight:700;-webkit-text-stroke:0.25px currentColor;color:#4b5563;letter-spacing:0.290px;">Completed:</span>
<span class="t" style="left:1313.40px;top:990.72px;font-size:27.5px;line-height:27.5px;font-weight:700;-webkit-text-stroke:0.25px currentColor;color:#4b5563;letter-spacing:2.096px;">0 / 7</span>
<svg class="b" style="left:1179.3px;top:1138.3px" width="15.100000000000136" height="24.90000000000009" viewBox="0 0 15.100000000000136 24.90000000000009" ><path d="M13.000000000000137,2.1 L2.415,12.450000000000045 L13.000000000000137,22.80000000000009" fill="none" stroke="#a6a6a6" stroke-width="4.2" stroke-linecap="round" stroke-linejoin="round"/></svg>
<span class="t" style="left:1231.70px;top:1138.22px;font-size:27.5px;line-height:27.5px;color:#3e454d;letter-spacing:0.372px;">Shows:</span>
<span class="t" style="left:1338.80px;top:1138.22px;font-size:27.5px;line-height:27.5px;color:#3e454d;letter-spacing:-1.656px;">1 - 1 / 1</span>
<span class="t" style="left:1453.20px;top:1138.22px;font-size:27.5px;line-height:27.5px;color:#3e454d;letter-spacing:0.015px;">Page Size:</span>
<div class="b" style="left:1605px;top:1122px;width:135px;height:61px;background:transparent;border:2px solid #e6e6e7;border-radius:9px;"></div>
<span class="t" style="left:1619.00px;top:1138.22px;font-size:27.5px;line-height:27.5px;color:#3e454d;letter-spacing:-2.294px;">10</span>
<svg class="b" style="left:1699.2px;top:1147.4px" width="25.200000000000045" height="14.799999999999955" viewBox="0 0 25.200000000000045 14.799999999999955" ><path d="M2.2,2.2 L12.600000000000023,12.269999999999955 L23.000000000000046,2.2" fill="none" stroke="#3e454d" stroke-width="4.4" stroke-linecap="round" stroke-linejoin="round"/></svg>
<span class="t" style="left:1775.60px;top:1138.22px;font-size:27.5px;line-height:27.5px;color:#3e454d;letter-spacing:0.394px;">Page:</span>
<div class="b" style="left:1866px;top:1122px;width:135.5px;height:61px;background:transparent;border:2px solid #e6e6e7;border-radius:9px;"></div>
<span class="t" style="left:1881.50px;top:1138.22px;font-size:27.5px;line-height:27.5px;color:#3e454d;">1</span>
<svg class="b" style="left:1960.6px;top:1147.4px" width="24.600000000000136" height="14.799999999999955" viewBox="0 0 24.600000000000136 14.799999999999955" ><path d="M2.2,2.2 L12.300000000000068,12.269999999999955 L22.400000000000137,2.2" fill="none" stroke="#3e454d" stroke-width="4.4" stroke-linecap="round" stroke-linejoin="round"/></svg>
<svg class="b" style="left:2039px;top:1138.3px" width="15.599999999999909" height="24.90000000000009" viewBox="0 0 15.599999999999909 24.90000000000009" ><path d="M2.1,2.1 L13.18499999999991,12.450000000000045 L2.1,22.80000000000009" fill="none" stroke="#a6a6a6" stroke-width="4.2" stroke-linecap="round" stroke-linejoin="round"/></svg>
</section>
</body></html>
